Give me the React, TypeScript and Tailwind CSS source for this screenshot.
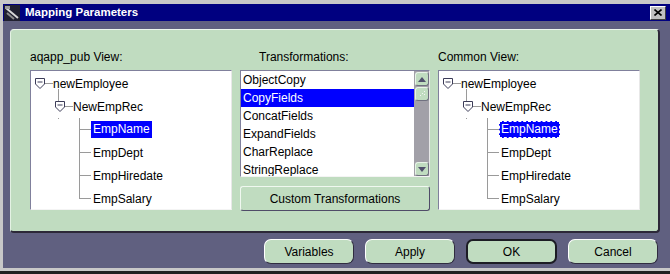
import React from 'react'

const font = { fontFamily: '"Liberation Sans", Arial, sans-serif' }

const Shield = ({ x = 0 }: { x?: number }) => (
    <g transform={`translate(${x},0)`}>
        <path d="M0.5 6.5 H9.5 V12 L5 16.5 L0.5 12 Z" fill="white" stroke="#3c3c58" />
        <line x1="2.5" y1="10" x2="7.5" y2="10" stroke="#3c3c58" />
    </g>
)

const RootRow = ({ label }: { label: string }) => (
    <div className="flex h-[23px] items-center pl-[4px]">
        <svg width="18" height="23" className="shrink-0">
            <Shield />
            <line x1="10" y1="11.5" x2="18" y2="11.5" stroke="#9a9a9a" />
        </svg>
        <span>{label}</span>
    </div>
)

const RecordRow = ({ label }: { label: string }) => (
    <div className="flex h-[23px] items-center pl-[24px]">
        <svg width="18" height="23" className="shrink-0" overflow="visible">
            <line x1="3.5" y1="-6" x2="3.5" y2="6" stroke="#9a9a9a" />
            <Shield />
            <line x1="10" y1="11.5" x2="18" y2="11.5" stroke="#9a9a9a" />
        </svg>
        <span>{label}</span>
    </div>
)

const LeafRow = ({
    label,
    first,
    last,
    selected,
    focused
}: {
    label: string
    first?: boolean
    last?: boolean
    selected?: boolean
    focused?: boolean
}) => (
    <div className="flex h-[23px] items-center pl-[24px]">
        <svg width="36" height="23" className="shrink-0">
            {first && <rect x="3" y="0" width="1" height="1" fill="#9a9a9a" />}
            <line x1="24.5" y1="0" x2="24.5" y2={last ? 12 : 23} stroke="#9a9a9a" />
            <line x1="24" y1="11.5" x2="36" y2="11.5" stroke="#9a9a9a" />
        </svg>
        <span
            className={
                selected
                    ? focused
                        ? 'h-[17px] border border-dashed border-white bg-[#0000ff] px-[1px] leading-[15px] text-white'
                        : 'h-[17px] bg-[#0000ff] px-[2px] leading-[17px] text-white'
                    : 'px-[2px]'
            }
        >
            {label}
        </span>
    </div>
)

const Tree = ({ focused }: { focused?: boolean }) => (
    <div className="h-[140px] w-[202px] overflow-hidden border border-t-[#80809c] border-l-[#80809c] border-r-[#e8e8e8] border-b-[#f4f4f4] bg-white pt-[1px] text-[12px] text-black">
        <RootRow label="newEmployee" />
        <RecordRow label="NewEmpRec" />
        <LeafRow label="EmpName" first selected focused={focused} />
        <LeafRow label="EmpDept" />
        <LeafRow label="EmpHiredate" />
        <LeafRow label="EmpSalary" last />
    </div>
)

const transforms = ['ObjectCopy', 'CopyFields', 'ConcatFields', 'ExpandFields', 'CharReplace', 'StringReplace']

const ScrollButton = ({ down }: { down?: boolean }) => (
    <div className="flex h-[14px] w-[14px] items-center justify-center rounded-[3px] border border-t-[#e8f4e8] border-l-[#e8f4e8] border-r-[#707080] border-b-[#707080] bg-[#c0dcc0]">
        <svg width="8" height="5">
            <path d={down ? 'M0 0 H8 L4 5 Z' : 'M0 5 H8 L4 0 Z'} fill="#50506c" />
        </svg>
    </div>
)

const DialogButton = ({ label, primary }: { label: string; primary?: boolean }) => (
    <button
        className={
            primary
                ? 'h-[25px] w-[91px] rounded-[7px] border-2 border-[#1c1c24] bg-[#c0dcc0] text-[12px] text-black'
                : 'h-[25px] w-[90px] rounded-[7px] border border-t-white border-l-white border-r-[#302c40] border-b-[#302c40] bg-[#c0dcc0] text-[12px] text-black'
        }
    >
        {label}
    </button>
)

export default function App() {
    return (
        <div className="h-[274px] w-[670px] overflow-hidden border-b-[3px] border-[#202020] bg-[#c8c8c8] pb-[3px] pl-[3px] pt-[4px]" style={font}>
            <div className="flex h-full flex-col bg-[#606080]">
                <div className="flex h-[17px] items-center bg-[#000080] pr-[4px]">
                    <svg width="16" height="16" className="ml-[1px] shrink-0">
                        <rect x="0" y="0" width="16" height="16" fill="#202030" />
                        <path d="M2 3 L14 13" stroke="#d8d8d8" strokeWidth="2" />
                        <path d="M3 8 L10 14" stroke="#8c8c8c" strokeWidth="2" />
                        <rect x="1" y="1" width="5" height="3" fill="#9c9c9c" />
                    </svg>
                    <span className="ml-[5px] text-[11.5px] font-bold text-white">Mapping Parameters</span>
                    <div className="ml-auto flex h-[14px] w-[16px] items-center justify-center border border-t-white border-l-white border-r-[#404040] border-b-[#404040] bg-[#c0c0c0]">
                        <svg width="8" height="7">
                            <path d="M0.5 0.5 L7.5 6.5 M7.5 0.5 L0.5 6.5" stroke="black" strokeWidth="1.6" />
                        </svg>
                    </div>
                </div>

                <div className="pl-[7px] pt-[8px]">
                    <div className="w-[650px] rounded-[4px] border-b-2 border-l border-r-2 border-t border-b-[#2c2838] border-l-[#e4f2e4] border-r-[#2c2838] border-t-[#eef8ee] bg-[#c0dcc0] pb-[20px] pl-[19px] pt-[20px] text-[12px] text-black">
                        <div className="flex gap-[8px]">
                            <div className="flex w-[202px] flex-col">
                                <div className="mb-[6px] h-[14px] leading-[14px]">aqapp_pub View:</div>
                                <Tree />
                            </div>

                            <div className="flex w-[190px] flex-col">
                                <div className="mb-[6px] h-[14px] pl-[19px] leading-[14px]">Transformations:</div>
                                <div className="flex h-[107px] overflow-hidden border border-t-[#80809c] border-l-[#80809c] border-r-[#e8e8e8] border-b-[#f4f4f4] bg-white">
                                    <div className="flex-1">
                                        {transforms.map((t, i) => (
                                            <div
                                                key={t}
                                                className={
                                                    i === 1
                                                        ? 'h-[18px] bg-[#0000ff] pl-[2px] leading-[18px] text-white'
                                                        : 'h-[18px] pl-[2px] leading-[18px]'
                                                }
                                            >
                                                {t}
                                            </div>
                                        ))}
                                    </div>
                                    <div className="flex w-[15px] flex-col bg-[#a2a0a8] pl-[1px] pt-[1px]">
                                        <ScrollButton />
                                        <div className="mt-[1px] flex h-[14px] w-[14px] items-center justify-center rounded-[3px] border border-t-[#e8f4e8] border-l-[#e8f4e8] border-r-[#707080] border-b-[#707080] bg-[#c0dcc0]">
                                            <svg width="8" height="8">
                                                <rect x="6" y="1" width="1" height="1" fill="#f4f4f4" />
                                                <rect x="4" y="3" width="1" height="1" fill="#f4f4f4" />
                                                <rect x="2" y="5" width="1" height="1" fill="#f4f4f4" />
                                                <rect x="6" y="4" width="1" height="1" fill="#f4f4f4" />
                                            </svg>
                                        </div>
                                        <div className="flex-1" />
                                        <ScrollButton down />
                                    </div>
                                </div>
                                <button className="mt-[9px] h-[25px] w-[190px] rounded-[3px] border border-t-[#f0f8f0] border-l-[#f0f8f0] border-r-[#504c68] border-b-[#504c68] bg-[#c0dcc0] text-[12px] text-black">
                                    Custom Transformations
                                </button>
                            </div>

                            <div className="flex w-[202px] flex-col">
                                <div className="mb-[6px] h-[14px] leading-[14px]">Common View:</div>
                                <Tree focused />
                            </div>
                        </div>
                    </div>

                    <div className="mt-[6px] flex w-[650px] justify-end gap-[11px] pr-[2px]">
                        <DialogButton label="Variables" />
                        <DialogButton label="Apply" />
                        <DialogButton label="OK" primary />
                        <DialogButton label="Cancel" />
                    </div>
                </div>
            </div>
        </div>
    )
}
